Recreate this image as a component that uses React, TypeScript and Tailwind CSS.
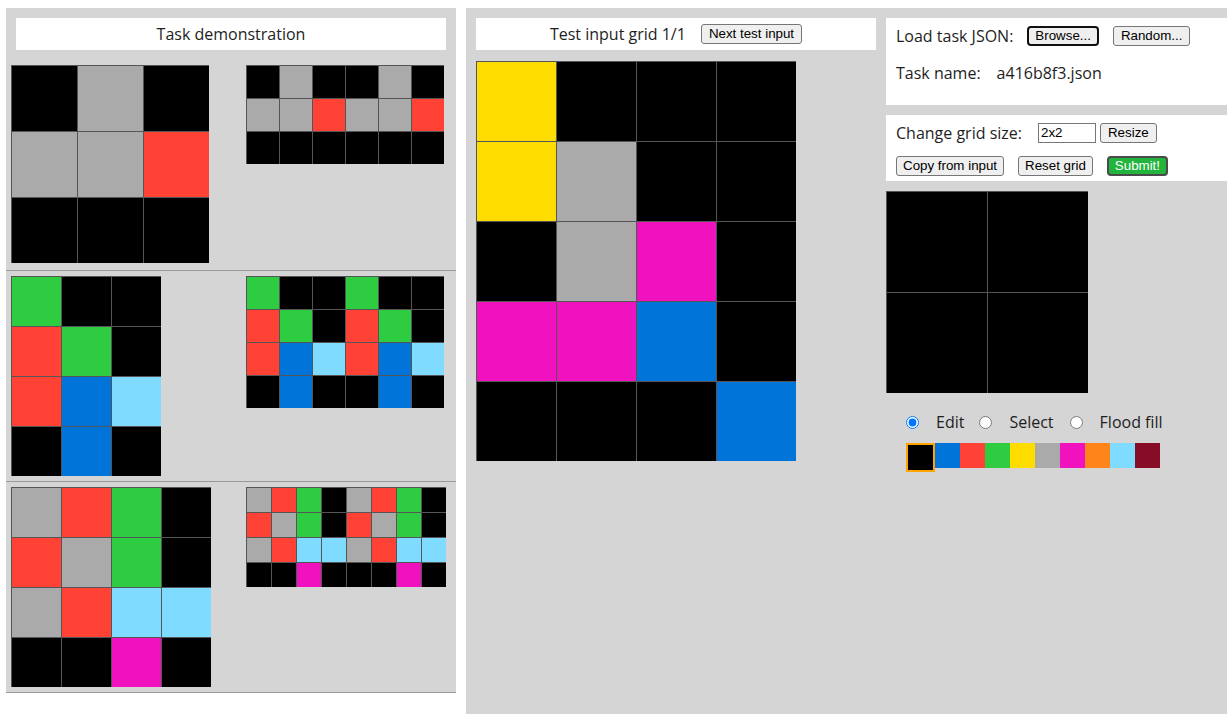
const PALETTE = [
  "bg-black",
  "bg-[#0074d9]",
  "bg-[#ff4136]",
  "bg-[#2ecc40]",
  "bg-[#ffdc00]",
  "bg-[#aaaaaa]",
  "bg-[#f012be]",
  "bg-[#ff851b]",
  "bg-[#7fdbff]",
  "bg-[#870c25]",
];

type GridProps = { rows: string[]; size: number };

function Grid({ rows, size }: GridProps) {
  return (
    <div className="flex flex-col">
      {rows.map((row, r) => (
        <div key={r} className="flex">
          {row.split("").map((c, i) => (
            <div
              key={i}
              className={`box-border border-t border-l border-[#555] ${PALETTE[Number(c)]}`}
              style={{ width: size, height: size }}
            />
          ))}
        </div>
      ))}
    </div>
  );
}

const double = (rows: string[]) => rows.map((r) => r + r);

const PAIRS = [
  { input: ["050", "552", "000"], inSize: 66, outSize: 33 },
  { input: ["300", "230", "218", "010"], inSize: 50, outSize: 33 },
  { input: ["5230", "2530", "5288", "0060"], inSize: 50, outSize: 25 },
];

type BtnProps = {
  children: React.ReactNode;
  className?: string;
  look?: "plain" | "focused" | "submit";
};

function Btn({ children, className = "", look = "plain" }: BtnProps) {
  const skin =
    look === "submit"
      ? "rounded-[4px] border-2 border-[#4a4a4a] bg-[#22b43c] text-white"
      : look === "focused"
        ? "rounded-[4px] border-2 border-[#101010] bg-[#efefef] text-black"
        : "rounded-[3px] border border-[#767676] bg-[#efefef] text-black";
  return (
    <button
      type="button"
      className={`box-border flex h-[20px] items-center px-[6px] font-['Liberation_Sans',Arial,sans-serif] text-[13.33px] leading-none ${skin} ${className}`}
    >
      {children}
    </button>
  );
}

export default function App() {
  return (
    <div className="flex h-[714px] overflow-hidden bg-white pl-[6px] pt-[8px] font-['Open_Sans',sans-serif] text-[16px] text-[#1e1e1e]">
      {/* demonstration pairs */}
      <div className="w-[450px] shrink-0 self-start bg-[#d5d5d5] pt-[10px]">
        <div className="mx-[10px] flex h-[32px] items-center justify-center bg-white">
          Task demonstration
        </div>
        <div className="mt-[10px]">
          {PAIRS.map((p, i) => (
            <div
              key={i}
              className="box-border flex h-[211px] border-b border-[#999] px-[5px] pt-[5px]"
            >
              <div className="w-[235px] shrink-0">
                <Grid rows={p.input} size={p.inSize} />
              </div>
              <Grid rows={double(p.input)} size={p.outSize} />
            </div>
          ))}
        </div>
      </div>

      {/* test input + output editor */}
      <div className="ml-[10px] flex min-w-0 flex-1 gap-[10px] bg-[#d5d5d5] pl-[10px] pt-[10px]">
        <div className="w-[400px] shrink-0">
          <div className="flex h-[32px] items-center justify-center gap-[15px] bg-white">
            <span>Test input grid 1/1</span>
            <Btn className="px-[7px]">Next test input</Btn>
          </div>
          <div className="mt-[11px]">
            <Grid rows={["4000", "4500", "0560", "6610", "0001"]} size={80} />
          </div>
        </div>

        <div className="min-w-0 flex-1">
          <div className="box-border h-[87px] bg-white pl-[10px] pt-[7px]">
            <div className="flex h-[21px] items-center">
              <span>Load task JSON:</span>
              <Btn look="focused" className="ml-[14px]">
                Browse...
              </Btn>
              <Btn className="ml-[14px] px-[7px]">Random...</Btn>
            </div>
            <div className="mt-[16px] flex h-[22px] items-center">
              <span>Task name:</span>
              <span className="ml-[16px]">a416b8f3.json</span>
            </div>
          </div>

          <div className="mt-[10px] box-border h-[66px] bg-white pl-[10px] pt-[7px]">
            <div className="flex h-[21px] items-center">
              <span>Change grid size:</span>
              <input
                defaultValue="2x2"
                className="ml-[16px] box-border h-[20px] w-[58px] border border-[#767676] bg-white px-[2px] font-['Liberation_Sans',Arial,sans-serif] text-[13.33px] text-black outline-none"
              />
              <Btn className="ml-[4px] px-[7px]">Resize</Btn>
            </div>
            <div className="mt-[12px] flex h-[21px] items-center">
              <Btn>Copy from input</Btn>
              <Btn className="ml-[14px]">Reset grid</Btn>
              <Btn look="submit" className="ml-[14px]">
                Submit!
              </Btn>
            </div>
          </div>

          <div className="mt-[10px]">
            <Grid rows={["00", "00"]} size={101} />
          </div>

          <div className="mt-[17px] flex h-[24px] items-center pl-[20px]">
            <input type="radio" name="mode" defaultChecked className="m-0 h-[13px] w-[13px]" />
            <span className="ml-[17px]">Edit</span>
            <input type="radio" name="mode" className="m-0 ml-[15px] h-[13px] w-[13px]" />
            <span className="ml-[17px]">Select</span>
            <input type="radio" name="mode" className="m-0 ml-[16px] h-[13px] w-[13px]" />
            <span className="ml-[17px]">Flood fill</span>
          </div>

          <div className="mt-[9px] flex items-start pl-[20px]">
            {PALETTE.map((cls, i) =>
              i === 0 ? (
                <div key={i} className={`box-border h-[29px] w-[29px] border-2 border-[#ffa500] ${cls}`} />
              ) : (
                <div key={i} className={`h-[25px] w-[25px] ${cls}`} />
              )
            )}
          </div>
        </div>
      </div>
    </div>
  );
}
